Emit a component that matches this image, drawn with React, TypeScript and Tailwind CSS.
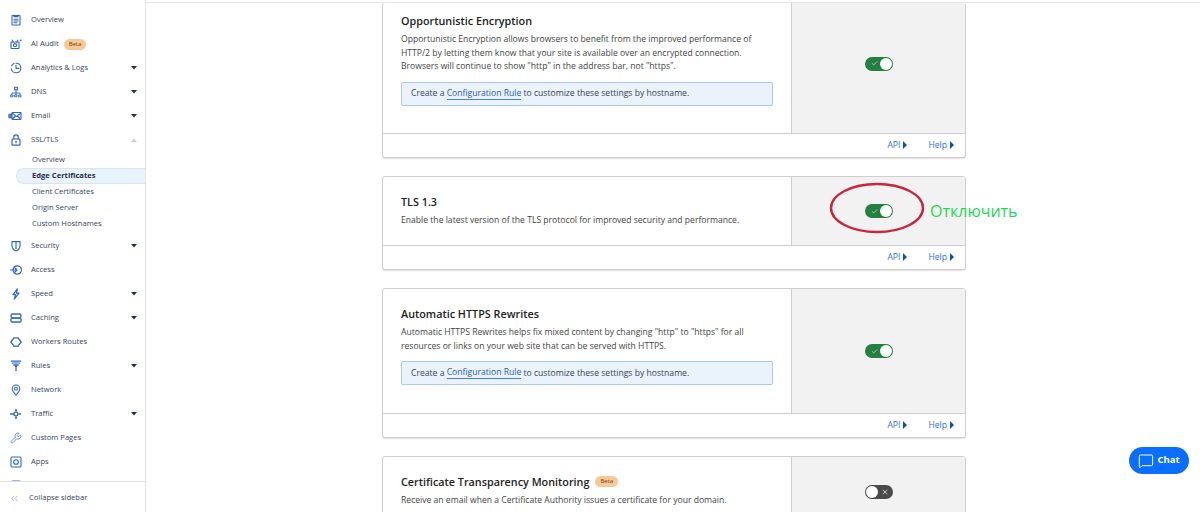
import { ReactNode } from "react";
import { ChevronsLeft, MessageSquare, Check, X, Wrench } from "lucide-react";

const BLUE = "#2f66c4";

function Ico({ children }: { children: ReactNode }) {
  return (
    <svg width="12" height="12" viewBox="0 0 12 12" fill="none" stroke={BLUE} strokeWidth="1.1" strokeLinecap="round" strokeLinejoin="round">
      {children}
    </svg>
  );
}

const icons: Record<string, ReactNode> = {
  overview: (
    <Ico>
      <rect x="2" y="1.5" width="8" height="9.5" rx="0.6" />
      <path d="M4 1v1.6h4V1M4 5.2h4M4 7h4M4 8.8h3" />
    </Ico>
  ),
  audit: (
    <Ico>
      <rect x="1" y="4" width="8" height="6.5" rx="0.8" />
      <circle cx="5" cy="7.2" r="1.6" />
      <path d="M3 4L2.2 2M7 4l.8-2" />
      <circle cx="10.6" cy="2.4" r="0.9" fill={BLUE} stroke="none" />
    </Ico>
  ),
  analytics: (
    <Ico>
      <path d="M6 1.2A4.8 4.8 0 1 1 1.3 6.8" />
      <path d="M1.6 4A4.8 4.8 0 0 1 4 1.6" />
      <path d="M6 3.4V6.4H8.8" />
    </Ico>
  ),
  dns: (
    <Ico>
      <rect x="4.6" y="1.2" width="2.8" height="2.6" />
      <path d="M6 3.8v3.2M2 8.8V7h8v1.8M6 7v1.8" strokeWidth="0.9" />
      <rect x="1" y="9" width="2" height="1.8" strokeWidth="0.9" />
      <rect x="5" y="9" width="2" height="1.8" strokeWidth="0.9" />
      <rect x="9" y="9" width="2" height="1.8" strokeWidth="0.9" />
    </Ico>
  ),
  email: (
    <svg width="14" height="12" viewBox="0 0 14 12" fill="none" stroke={BLUE} strokeWidth="1.1" className="-ml-[2px]">
      <rect x="4" y="2.5" width="9" height="7" rx="0.6" />
      <path d="M4 3l4.5 3.4L13 3M4.5 9l3-3M12.5 9l-3-3" />
      <path d="M0.6 4.4H4M0 6h4M0.6 7.6H4" strokeWidth="1.3" />
    </svg>
  ),
  lock: (
    <Ico>
      <rect x="2" y="5" width="8" height="6.2" rx="0.7" strokeWidth="1.2" />
      <path d="M3.8 5V3a2.2 2.2 0 0 1 4.4 0v2" strokeWidth="1.2" />
      <path d="M6 7.2v1.6" strokeWidth="1.2" />
    </Ico>
  ),
  security: (
    <Ico>
      <path d="M2 1.6h8v4.2C10 8.4 8 10.2 6 11 4 10.2 2 8.4 2 5.8z" />
      <path d="M6 2v6.4" />
    </Ico>
  ),
  access: (
    <Ico>
      <circle cx="7.2" cy="6" r="4.2" strokeWidth="1.2" />
      <path d="M0.4 6h6.6M5 4l2 2-2 2" strokeWidth="1.2" />
    </Ico>
  ),
  speed: (
    <Ico>
      <path d="M7.4 0.8L3 6.6h2.6L4.2 11.2 9 5.2H6.4z" strokeWidth="1.2" />
    </Ico>
  ),
  caching: (
    <Ico>
      <rect x="1" y="2" width="10" height="3.8" rx="1.6" strokeWidth="1.3" />
      <rect x="1" y="6.2" width="10" height="3.8" rx="1" strokeWidth="1.3" />
    </Ico>
  ),
  workers: (
    <Ico>
      <path d="M4 1.8L0.8 6 4 10.2M8 1.8L11.2 6 8 10.2M4 1.8h4M4 10.2h4" strokeWidth="1.3" />
    </Ico>
  ),
  rules: (
    <Ico>
      <path d="M1.4 1.2h9.2M2.4 3h7.2M3.6 4.8h4.8" strokeWidth="1.2" />
      <path d="M5 5.6L6 7l1-1.4M6 7v2" strokeWidth="1.3" />
      <circle cx="6" cy="10.4" r="0.8" fill={BLUE} stroke="none" />
    </Ico>
  ),
  network: (
    <Ico>
      <path d="M6 11.2C4 8.8 2.2 7 2.2 4.8a3.8 3.8 0 0 1 7.6 0C9.8 7 8 8.8 6 11.2z" />
      <circle cx="6" cy="4.8" r="1.5" />
    </Ico>
  ),
  traffic: (
    <Ico>
      <path d="M0.6 6H4" strokeWidth="1.5" />
      <rect x="4" y="4.2" width="3.6" height="3.6" rx="0.8" />
      <path d="M7.6 6H9M6 2.8v1.4M6 7.8v1.4" />
      <circle cx="6" cy="2" r="1" fill={BLUE} stroke="none" />
      <circle cx="6" cy="10" r="1" fill={BLUE} stroke="none" />
      <circle cx="10" cy="6" r="1" fill={BLUE} stroke="none" />
    </Ico>
  ),
  pages: <Wrench size={12} color={BLUE} strokeWidth={1.4} />,
  apps: (
    <Ico>
      <rect x="1" y="1" width="10" height="10" rx="1" />
      <circle cx="6" cy="6" r="2.3" />
    </Ico>
  ),
  more: (
    <Ico>
      <rect x="1.5" y="1" width="9" height="9" rx="1" />
    </Ico>
  ),
};

function Caret({ up }: { up?: boolean }) {
  return (
    <svg width="6" height="4" viewBox="0 0 6 4" className="absolute left-[131px] top-[10px]">
      {up ? <path d="M0 4 L3 0.5 L6 4 Z" fill="#c5cfdc" /> : <path d="M0 0 L6 0 L3 3.5 Z" fill="#1d2f4f" />}
    </svg>
  );
}

function NavItem({ icon, label, caret, up, badge }: { icon: string; label: string; caret?: boolean; up?: boolean; badge?: boolean }) {
  return (
    <div className="relative flex h-6 items-center pl-[10px] text-[7.6px] text-[#36455a]">
      <span className="flex w-[21px] items-center">{icons[icon]}</span>
      <span>{label}</span>
      {badge && <Beta className="ml-[5px]" />}
      {caret && <Caret up={up} />}
    </div>
  );
}

function Beta({ className }: { className?: string }) {
  return (
    <span className={`rounded-full bg-[#f9c897] px-[5px] text-[6px] leading-[11px] text-[#6b3f14] ${className}`}>Beta</span>
  );
}

function SubItem({ label, active }: { label: string; active?: boolean }) {
  return (
    <div
      className={
        active
          ? "ml-4 flex h-4 items-center rounded-l-full border border-r-0 border-[#d5e4f7] bg-[#eaf2fc] pl-[15px] text-[7.6px] font-bold text-[#1d2f4f]"
          : "ml-4 flex h-4 items-center pl-4 text-[7.6px] text-[#36455a]"
      }
    >
      {label}
    </div>
  );
}

function Toggle({ on }: { on: boolean }) {
  return on ? (
    <div className="flex h-[14px] w-[28px] items-center justify-between rounded-full bg-[#23803f] pl-[6px] pr-px">
      <Check size={7} color="#fff" strokeWidth={2} />
      <span className="h-3 w-3 rounded-full bg-white" />
    </div>
  ) : (
    <div className="flex h-[14px] w-[28px] items-center justify-between rounded-full bg-[#4a4a4a] pl-px pr-[4px]">
      <span className="h-3 w-3 rounded-full bg-white" />
      <X size={8} color="#fff" strokeWidth={2} />
    </div>
  );
}

function Rule() {
  return (
    <div className="mt-[8px] flex h-6 w-[372px] items-center rounded-[2px] border border-[#a9c8f5] bg-[#eaf2fc] pl-[9px] text-[8.6px] text-[#36455a]">
      Create a&nbsp;<span className="border-b border-[#4d7fd0] leading-[11px] text-[#2c5fa8]">Configuration Rule</span>&nbsp;to customize these settings by hostname.
    </div>
  );
}

function FooterLink({ label }: { label: string }) {
  return (
    <span className="flex items-center gap-[3px] text-[8.6px] text-[#2f6dc4]">
      {label}
      <svg width="4" height="8" viewBox="0 0 4 8">
        <path d="M0 0 L4 4 L0 8 Z" fill="#0a4fb5" />
      </svg>
    </span>
  );
}

function Card({
  title,
  beta,
  on,
  children,
  height,
  top,
}: {
  title: string;
  beta?: boolean;
  on: boolean;
  children: ReactNode;
  height: string;
  top?: boolean;
}) {
  return (
    <div className={`w-[584px] shrink-0 rounded-[3px] border border-[#cfcfcf] bg-white shadow-[0_1px_1px_#e2e2e2] ${top ? "border-t-0" : ""}`}>
      <div className={`flex ${height}`}>
        <div className={`flex-1 pl-[18px] ${top ? "pt-[9px]" : "pt-4"}`}>
          <div className="flex items-center gap-[6px] text-[10.8px] font-semibold leading-[17px] text-[#222]">
            {title}
            {beta && <Beta className="font-normal" />}
          </div>
          {children}
        </div>
        <div className={`flex w-[174px] items-center justify-center border-l border-[#cfcfcf] bg-[#f2f2f2] ${top ? "pb-[9px]" : ""}`}>
          <Toggle on={on} />
        </div>
      </div>
      <div className="flex h-6 items-center justify-end gap-[21px] border-t border-[#cfcfcf] pr-[11px]">
        <FooterLink label="API" />
        <FooterLink label="Help" />
      </div>
    </div>
  );
}

export default function App() {
  return (
    <div className="relative flex h-[512px] w-[1200px] overflow-hidden bg-white font-['Open_Sans',sans-serif]">
      <aside className="flex h-full w-[146px] shrink-0 flex-col border-r border-[#e3e3e3] bg-white">
        <div className="flex-1 overflow-hidden pt-2">
          <NavItem icon="overview" label="Overview" />
          <NavItem icon="audit" label="AI Audit" badge />
          <NavItem icon="analytics" label="Analytics & Logs" caret />
          <NavItem icon="dns" label="DNS" caret />
          <NavItem icon="email" label="Email" caret />
          <NavItem icon="lock" label="SSL/TLS" caret up />
          <div>
            <SubItem label="Overview" />
            <SubItem label="Edge Certificates" active />
            <SubItem label="Client Certificates" />
            <SubItem label="Origin Server" />
            <SubItem label="Custom Hostnames" />
          </div>
          <div className="pt-[2px]">
            <NavItem icon="security" label="Security" caret />
            <NavItem icon="access" label="Access" />
            <NavItem icon="speed" label="Speed" caret />
            <NavItem icon="caching" label="Caching" caret />
            <NavItem icon="workers" label="Workers Routes" />
            <NavItem icon="rules" label="Rules" caret />
            <NavItem icon="network" label="Network" />
            <NavItem icon="traffic" label="Traffic" caret />
            <NavItem icon="pages" label="Custom Pages" />
            <NavItem icon="apps" label="Apps" />
            <NavItem icon="more" label="" />
          </div>
        </div>
        <div className="flex h-[31px] shrink-0 items-center border-t border-[#e3e3e3] pl-[9px] pt-[2px] text-[7.6px] text-[#36455a]">
          <ChevronsLeft size={11} color="#6f8fbf" strokeWidth={1.4} className="mr-[9px]" />
          Collapse sidebar
        </div>
      </aside>

      <main className="flex-1 overflow-hidden">
        <div className="h-[3px] border-b border-[#e6e6e6]" />
        <div className="flex flex-col gap-[18px] pl-[236px]">
          <Card top on height="h-[130px]" title="Opportunistic Encryption">
            <p className="mt-1 w-[370px] text-[8.6px] leading-[13.6px] text-[#444]">
              Opportunistic Encryption allows browsers to benefit from the improved performance of HTTP/2 by letting them know that your site is available over an encrypted connection. Browsers will continue to show "http" in the address bar, not "https".
            </p>
            <Rule />
          </Card>
          <Card on height="h-[68px]" title="TLS 1.3">
            <p className="mt-1 text-[8.6px] leading-[13.6px] text-[#444]">
              Enable the latest version of the TLS protocol for improved security and performance.
            </p>
          </Card>
          <Card on height="h-[124px]" title="Automatic HTTPS Rewrites">
            <p className="mt-1 w-[370px] text-[8.6px] leading-[13.6px] text-[#444]">
              Automatic HTTPS Rewrites helps fix mixed content by changing "http" to "https" for all resources or links on your web site that can be served with HTTPS.
            </p>
            <Rule />
          </Card>
          <Card on={false} height="h-[70px]" title="Certificate Transparency Monitoring" beta>
            <p className="mt-1 text-[8.6px] leading-[13.6px] text-[#444]">
              Receive an email when a Certificate Authority issues a certificate for your domain.
            </p>
          </Card>
        </div>
      </main>

      {/* annotation drawn over the screenshot */}
      <svg className="absolute left-[826px] top-[178px]" width="102" height="60" viewBox="0 0 102 60">
        <ellipse cx="51" cy="30" rx="46" ry="24" fill="none" stroke="#c8263f" strokeWidth="2.4" />
      </svg>
      <span className="absolute left-[930px] top-[199px] text-[16px] leading-[24px] text-[#1fd655]">Отключить</span>

      <button className="absolute left-[1129px] top-[447px] flex h-[27px] w-[60px] items-center justify-center gap-[3px] rounded-full bg-[#0a6fff] text-[9.5px] font-bold text-white">
        <MessageSquare size={16} strokeWidth={1.5} />
        Chat
      </button>
    </div>
  );
}
